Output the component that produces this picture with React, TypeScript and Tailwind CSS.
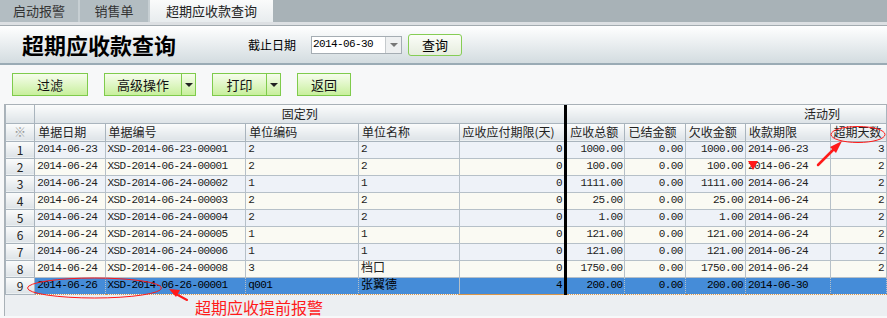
import React from 'react';

const mono = "font-['Liberation_Mono','Noto_Sans_CJK_SC',monospace] text-[11px] tracking-[-0.6px]";

interface Row {
  date: string;
  no: string;
  code: string;
  name: string;
  term: string;
  total: string;
  settled: string;
  owed: string;
  due: string;
  days: string;
}

const rows: Row[] = [
  { date: '2014-06-23', no: 'XSD-2014-06-23-00001', code: '2', name: '2', term: '0', total: '1000.00', settled: '0.00', owed: '1000.00', due: '2014-06-23', days: '3' },
  { date: '2014-06-24', no: 'XSD-2014-06-24-00001', code: '2', name: '2', term: '0', total: '100.00', settled: '0.00', owed: '100.00', due: '2014-06-24', days: '2' },
  { date: '2014-06-24', no: 'XSD-2014-06-24-00002', code: '1', name: '1', term: '0', total: '1111.00', settled: '0.00', owed: '1111.00', due: '2014-06-24', days: '2' },
  { date: '2014-06-24', no: 'XSD-2014-06-24-00003', code: '2', name: '2', term: '0', total: '25.00', settled: '0.00', owed: '25.00', due: '2014-06-24', days: '2' },
  { date: '2014-06-24', no: 'XSD-2014-06-24-00004', code: '2', name: '2', term: '0', total: '1.00', settled: '0.00', owed: '1.00', due: '2014-06-24', days: '2' },
  { date: '2014-06-24', no: 'XSD-2014-06-24-00005', code: '1', name: '1', term: '0', total: '121.00', settled: '0.00', owed: '121.00', due: '2014-06-24', days: '2' },
  { date: '2014-06-24', no: 'XSD-2014-06-24-00006', code: '1', name: '1', term: '0', total: '121.00', settled: '0.00', owed: '121.00', due: '2014-06-24', days: '2' },
  { date: '2014-06-24', no: 'XSD-2014-06-24-00008', code: '3', name: '档口', term: '0', total: '1750.00', settled: '0.00', owed: '1750.00', due: '2014-06-24', days: '2' },
  { date: '2014-06-26', no: 'XSD-2014-06-26-00001', code: 'q001', name: '张翼德', term: '4', total: '200.00', settled: '0.00', owed: '200.00', due: '2014-06-30', days: '' },
];

const GreenButton: React.FC<{ label: string; width: string; dropdown?: boolean }> = ({ label, width, dropdown }) => (
  <div className="flex h-[23px] border border-[#7fcb4c] bg-gradient-to-b from-[#f6fdec] to-[#c8ef9c]">
    <div className={`${width} flex items-center justify-center text-[13px] text-[#111]`}>{label}</div>
    {dropdown && (
      <div className="w-[14px] border-l border-[#7fcb4c] flex items-center justify-center">
        <div className="w-0 h-0 border-l-[4px] border-r-[4px] border-t-[4px] border-l-transparent border-r-transparent border-t-[#222]" />
      </div>
    )}
  </div>
);

// header cell look, alignment added per cell
const hdrCell = 'border border-[#a9b4bd] bg-gradient-to-b from-[#fbfcfc] to-[#dde3e7] px-[3px] font-normal text-[12px] text-[#222] h-[18px] leading-none';

export default function App() {
  return (
    <div className="relative w-[887px] h-[318px] overflow-hidden bg-[#f7f8f9] font-['Noto_Sans_CJK_SC',sans-serif] text-[#222]">
      {/* tabs */}
      <div className="h-[22px] bg-[#a8b2b7] flex">
        <div className="w-[80px] bg-[#b3bdc2] border-r-2 border-[#c7cfd3] flex items-center justify-center text-[13px] text-[#333]">启动报警</div>
        <div className="w-[70px] bg-[#b3bdc2] border-r-2 border-[#c7cfd3] flex items-center justify-center text-[13px] text-[#333]">销售单</div>
        <div className="w-[123px] bg-gradient-to-b from-[#fafbfb] to-[#e8ecee] flex items-center justify-center text-[13px] text-[#222]">超期应收款查询</div>
      </div>
      <div className="h-[4px] bg-[#dde0e3] border-b border-[#a3abb0]" />

      {/* title */}
      <div className="h-[39px] bg-gradient-to-b from-[#ffffff] to-[#d3dce0] border-b-2 border-[#9aabb5] flex items-center">
        <div className="ml-[22px] w-[226px] text-[22px] font-bold text-black">超期应收款查询</div>
        <div className="text-[12px] text-black w-[63px]">截止日期</div>
        <div className="flex h-[18px] w-[91px] border border-[#a5adb3] bg-white">
          <div className={`flex-1 flex items-center pl-[1px] ${mono} text-black`}>2014-06-30</div>
          <div className="w-[16px] border-l border-[#c5cacd] bg-[#eef0f1] flex items-center justify-center">
            <div className="w-0 h-0 border-l-[4px] border-r-[4px] border-t-[4px] border-l-transparent border-r-transparent border-t-[#777]" />
          </div>
        </div>
        <div className="ml-[6px] w-[54px] h-[22px] rounded-[3px] border border-[#86cd55] bg-gradient-to-b from-[#fbfdf8] to-[#e6edde] flex items-center justify-center text-[13px] text-black">查询</div>
      </div>

      {/* toolbar */}
      <div className="h-[39px] flex items-start pt-[8px] pl-[12px] gap-[16px]">
        <GreenButton label="过滤" width="w-[74px]" />
        <GreenButton label="高级操作" width="w-[76px]" dropdown />
        <GreenButton label="打印" width="w-[53px]" dropdown />
        <GreenButton label="返回" width="w-[52px]" />
      </div>

      {/* grid */}
      <div className="flex h-[212px]">
        <div className="w-[7px]" />
        <div className="flex-1 border-l border-t border-[#a9b1b7] bg-[#eceff2]">
          <table className="table-fixed border-collapse w-[882px]">
            <colgroup>
              <col className="w-[29px]" />
              <col className="w-[70px]" />
              <col className="w-[140px]" />
              <col className="w-[112px]" />
              <col className="w-[100px]" />
              <col className="w-[106px]" />
              <col className="w-[59px]" />
              <col className="w-[60px]" />
              <col className="w-[60px]" />
              <col className="w-[84px]" />
              <col className="w-[56px]" />
            </colgroup>
            <thead>
              <tr>
                <th className={`${hdrCell} border-t-0`} />
                <th colSpan={5} className={`${hdrCell} border-t-0 border-r-[3px] border-r-black text-center`}>固定列</th>
                <th colSpan={5} className={`${hdrCell} border-t-0 text-right pr-[46px]`}>活动列</th>
              </tr>
              <tr>
                <th className={`${hdrCell} text-center text-[#999] text-[11px]`}>※</th>
                <th className={`${hdrCell} text-left`}>单据日期</th>
                <th className={`${hdrCell} text-left`}>单据编号</th>
                <th className={`${hdrCell} text-left`}>单位编码</th>
                <th className={`${hdrCell} text-left`}>单位名称</th>
                <th className={`${hdrCell} text-left border-r-[3px] border-r-black whitespace-nowrap`}>应收应付期限(天)</th>
                <th className={`${hdrCell} text-left`}>应收总额</th>
                <th className={`${hdrCell} text-left`}>已结金额</th>
                <th className={`${hdrCell} text-left`}>欠收金额</th>
                <th className={`${hdrCell} text-left`}>收款期限</th>
                <th className={`${hdrCell} text-left`}>超期天数</th>
              </tr>
            </thead>
            <tbody>
              {rows.map((r, i) => {
                const sel = i === 8;
                const bg = sel ? 'bg-[#458cd8]' : i % 2 === 0 ? 'bg-[#eef2f8]' : 'bg-[#fafaf3]';
                const cell = `border border-[#b6c0c8] h-[17px] px-[2px] leading-none ${mono} text-[#222] ${bg} ${sel ? 'border-y-[#d9964a] border-dotted text-black' : ''}`;
                return (
                  <tr key={i}>
                    <td className="border border-[#a9b4bd] bg-gradient-to-b from-[#fbfcfc] to-[#dde3e7] h-[17px] text-center text-[12px] leading-none">{i + 1}</td>
                    <td className={cell}>{r.date}</td>
                    <td className={cell}>{r.no}</td>
                    <td className={cell}>{r.code}</td>
                    <td className={`${cell} ${r.name.length > 1 ? 'text-[12px] tracking-normal' : ''}`}>{r.name}</td>
                    <td className={`${cell} text-right border-r-[3px] border-r-black border-solid`}>{r.term}</td>
                    <td className={`${cell} text-right`}>{r.total}</td>
                    <td className={`${cell} text-right`}>{r.settled}</td>
                    <td className={`${cell} text-right`}>{r.owed}</td>
                    <td className={cell}>{r.due}</td>
                    <td className={`${cell} text-right`}>{r.days}</td>
                  </tr>
                );
              })}
            </tbody>
          </table>
        </div>
      </div>

      {/* annotations */}
      <svg className="absolute left-0 top-0 pointer-events-none" width="887" height="318" viewBox="0 0 887 318">
        <ellipse cx="858" cy="134.5" rx="27" ry="8" fill="none" stroke="#ff1a1a" strokeWidth="1" />
        <path d="M818 165 L834 149" stroke="#ff1a1a" strokeWidth="2.5" strokeLinecap="round" />
        <polygon points="842,141 830,147 836,153" fill="#ff1a1a" />
        <polygon points="748,161 758,161 753,170" fill="#ff1a1a" />
        <ellipse cx="94.5" cy="288" rx="67" ry="10" fill="none" stroke="#ff1a1a" strokeWidth="1" />
        <path d="M187 300 L176 294" stroke="#ff1a1a" strokeWidth="2" strokeLinecap="round" />
        <polygon points="169,289 180,290 176,297" fill="#ff1a1a" />
      </svg>
      <div className="absolute left-[195px] top-[299px] text-[16px] leading-[17px] text-[#ff1a1a] whitespace-nowrap">超期应收提前报警</div>
    </div>
  );
}
